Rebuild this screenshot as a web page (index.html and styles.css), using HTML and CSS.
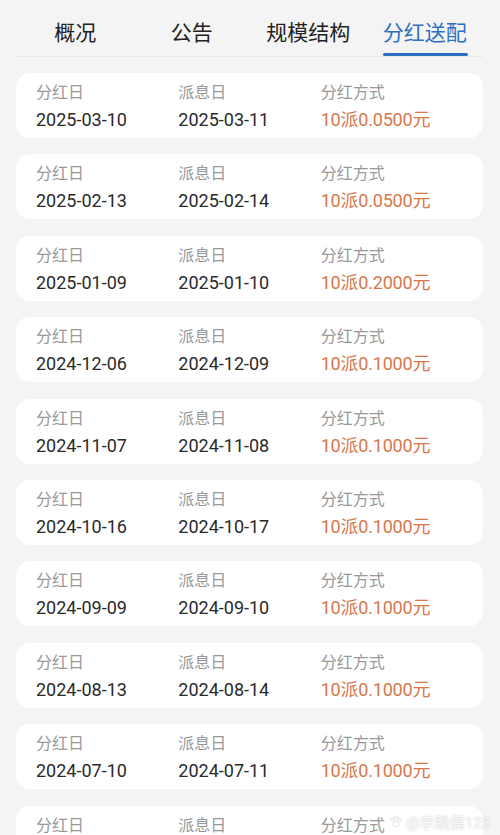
FILE: index.html
```html
<!DOCTYPE html>
<html lang="zh-CN">
<head>
  <meta charset="UTF-8">
  <meta name="viewport" content="width=device-width, initial-scale=1.0">
  <title>分红送配</title>
  <link rel="stylesheet" href="styles.css">
</head>
<body>
<div class="page">
  <nav class="tabs">
    <span class="tab">概况</span>
    <span class="tab">公告</span>
    <span class="tab">规模结构</span>
    <span class="tab active">分红送配</span>
  </nav>

  <div class="list">
    <div class="card">
      <div class="col"><span class="label">分红日</span><span class="value">2025-03-10</span></div>
      <div class="col"><span class="label">派息日</span><span class="value">2025-03-11</span></div>
      <div class="col"><span class="label">分红方式</span><span class="value plan">10派0.0500元</span></div>
    </div>
    <div class="card">
      <div class="col"><span class="label">分红日</span><span class="value">2025-02-13</span></div>
      <div class="col"><span class="label">派息日</span><span class="value">2025-02-14</span></div>
      <div class="col"><span class="label">分红方式</span><span class="value plan">10派0.0500元</span></div>
    </div>
    <div class="card">
      <div class="col"><span class="label">分红日</span><span class="value">2025-01-09</span></div>
      <div class="col"><span class="label">派息日</span><span class="value">2025-01-10</span></div>
      <div class="col"><span class="label">分红方式</span><span class="value plan">10派0.2000元</span></div>
    </div>
    <div class="card">
      <div class="col"><span class="label">分红日</span><span class="value">2024-12-06</span></div>
      <div class="col"><span class="label">派息日</span><span class="value">2024-12-09</span></div>
      <div class="col"><span class="label">分红方式</span><span class="value plan">10派0.1000元</span></div>
    </div>
    <div class="card">
      <div class="col"><span class="label">分红日</span><span class="value">2024-11-07</span></div>
      <div class="col"><span class="label">派息日</span><span class="value">2024-11-08</span></div>
      <div class="col"><span class="label">分红方式</span><span class="value plan">10派0.1000元</span></div>
    </div>
    <div class="card">
      <div class="col"><span class="label">分红日</span><span class="value">2024-10-16</span></div>
      <div class="col"><span class="label">派息日</span><span class="value">2024-10-17</span></div>
      <div class="col"><span class="label">分红方式</span><span class="value plan">10派0.1000元</span></div>
    </div>
    <div class="card">
      <div class="col"><span class="label">分红日</span><span class="value">2024-09-09</span></div>
      <div class="col"><span class="label">派息日</span><span class="value">2024-09-10</span></div>
      <div class="col"><span class="label">分红方式</span><span class="value plan">10派0.1000元</span></div>
    </div>
    <div class="card">
      <div class="col"><span class="label">分红日</span><span class="value">2024-08-13</span></div>
      <div class="col"><span class="label">派息日</span><span class="value">2024-08-14</span></div>
      <div class="col"><span class="label">分红方式</span><span class="value plan">10派0.1000元</span></div>
    </div>
    <div class="card">
      <div class="col"><span class="label">分红日</span><span class="value">2024-07-10</span></div>
      <div class="col"><span class="label">派息日</span><span class="value">2024-07-11</span></div>
      <div class="col"><span class="label">分红方式</span><span class="value plan">10派0.1000元</span></div>
    </div>
    <div class="card">
      <div class="col"><span class="label">分红日</span><span class="value">2024-06-12</span></div>
      <div class="col"><span class="label">派息日</span><span class="value">2024-06-13</span></div>
      <div class="col"><span class="label">分红方式</span><span class="value plan">10派0.1000元</span></div>
    </div>
  </div>

  <div class="watermark">
    <svg class="paw" viewBox="0 0 16 16" xmlns="http://www.w3.org/2000/svg">
      <circle cx="4" cy="5" r="1.8"/>
      <circle cx="8" cy="3.5" r="1.8"/>
      <circle cx="12" cy="5" r="1.8"/>
      <ellipse cx="8" cy="10.5" rx="3.8" ry="3.2"/>
    </svg>
    <span>@李跳儒123</span>
  </div>
</div>
</body>
</html>
```

FILE: styles.css
```css
* {
  margin: 0;
  padding: 0;
  box-sizing: border-box;
}

body {
  background: #f4f4f4;
  font-family: Roboto, "Noto Sans CJK SC", sans-serif;
  overflow: hidden;
}

.page {
  position: relative;
  height: 835px;
  overflow: hidden;
}

.tabs {
  display: flex;
  margin: 0 17px 0 17px;
  height: 57px;
  border-bottom: 1px solid #e9e9e9;
}

.tab {
  flex: 1;
  display: flex;
  justify-content: center;
  padding-top: 18px;
  font-size: 21px;
  line-height: 30px;
  color: #222;
}

.tab.active {
  color: #2e6fc1;
  position: relative;
}

.tab.active::after {
  content: "";
  position: absolute;
  left: 16px;
  right: 15px;
  bottom: 0;
  height: 3px;
  border-radius: 2px;
  background: #2e6fc1;
}

.list {
  display: flex;
  flex-direction: column;
  gap: 16.4px;
  padding: 16px 17px 0 16px;
}

.card {
  display: flex;
  height: 65px;
  flex-shrink: 0;
  padding: 9px 20px 0 20px;
  background: #fff;
  border-radius: 14px;
}

.col {
  display: flex;
  flex-direction: column;
  width: 143px;
}

.label {
  font-size: 16px;
  line-height: 22px;
  color: #999;
}

.value {
  margin-top: 3px;
  font-size: 18px;
  line-height: 26px;
  color: #2a2a2a;
}

.value.plan {
  color: #d7784b;
  letter-spacing: -0.2px;
}

.watermark {
  position: absolute;
  right: 10px;
  bottom: 3px;
  display: flex;
  align-items: center;
  gap: 3px;
  font-size: 15px;
  color: rgba(255, 255, 255, 0.85);
  text-shadow: 0 0 2px rgba(0, 0, 0, 0.25);
}

.paw {
  width: 14px;
  height: 14px;
  fill: rgba(255, 255, 255, 0.85);
  stroke: rgba(0, 0, 0, 0.2);
  stroke-width: 0.6;
}
```
